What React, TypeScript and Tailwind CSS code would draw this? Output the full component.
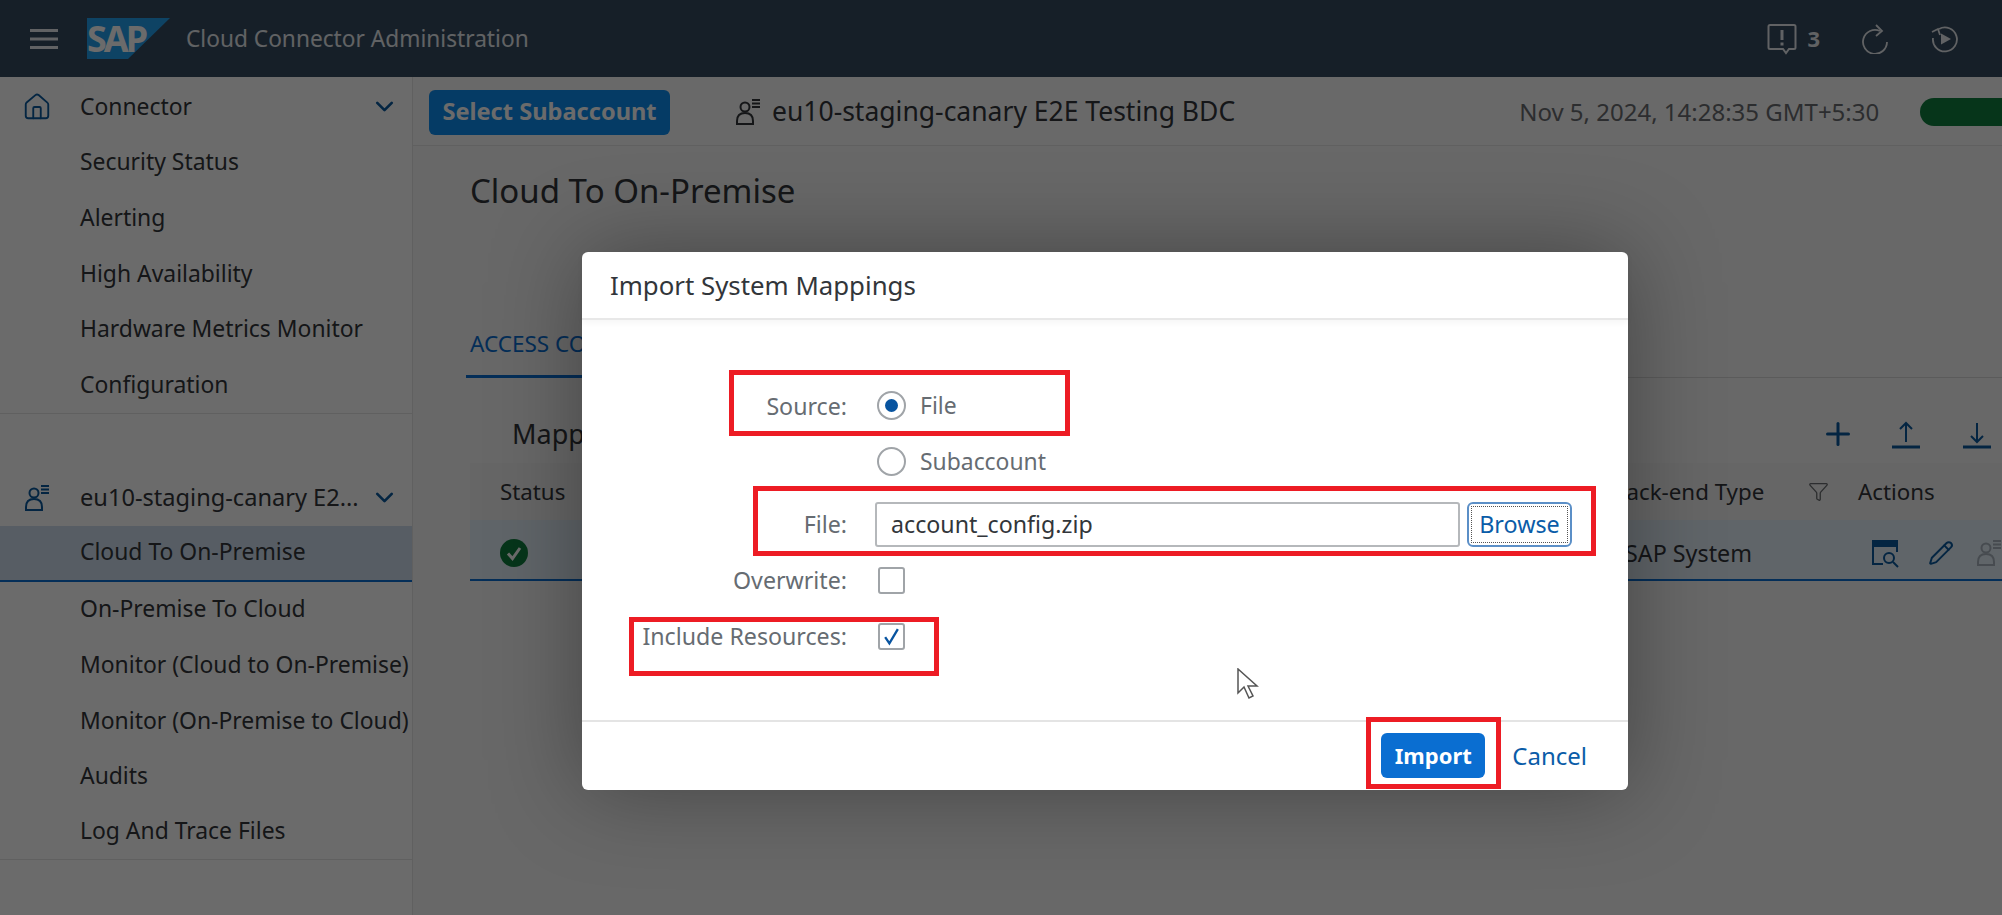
import React from "react";
import { ChevronDown, Home, Plus, Filter, Pencil } from "lucide-react";

const font = { fontFamily: '"Noto Sans", "Open Sans", sans-serif' };

function TenantIcon({ className }: { className: string }) {
  return (
    <svg viewBox="0 0 26 28" fill="none" stroke="currentColor" strokeWidth="2" className={className}>
      <circle cx="10" cy="9" r="4.5" />
      <path d="M2 26v-3c0-5 3-8 8-8s8 3 8 8v3z" />
      <path d="M17 2h8M17 5.5h8M17 9h8" />
    </svg>
  );
}

function NavRow({ label, active, last }: { label: string; active?: boolean; last?: boolean }) {
  return (
    <div
      className={`flex h-[55.7px] items-center pl-[80px] whitespace-nowrap text-[22.9px] text-[#32363a] ${
        active ? "bg-[#cfdeee] border-b-2 border-[#0a6ed1]" : ""
      } ${last ? "border-b border-[#e5e5e5]" : ""}`}
    >
      {label}
    </div>
  );
}

function NavHead({ label, icon, size }: { label: string; icon: React.ReactNode; size: string }) {
  return (
    <div className={`flex h-[55.7px] items-center whitespace-nowrap text-[#32363a] ${size}`}>
      <div className="flex w-[80px] justify-center pr-[6px]">{icon}</div>
      <span className="flex-1">{label}</span>
      <ChevronDown className="mr-[13px] h-[29px] w-[29px] text-[#0a5a9e]" strokeWidth={2.2} />
    </div>
  );
}

function FormRow({ label, className, children }: { label: string; className: string; children: React.ReactNode }) {
  return (
    <div className={`flex items-center ${className}`}>
      <span className="w-[265px] whitespace-nowrap text-right text-[23.2px] text-[#666c72]">{label}</span>
      <div className="ml-[28px] flex flex-1 items-center">{children}</div>
    </div>
  );
}

function Radio({ checked }: { checked?: boolean }) {
  return (
    <span className="flex h-[29px] w-[29px] items-center justify-center rounded-full border-2 border-[#a0a4a8] bg-white">
      {checked && <span className="h-[13px] w-[13px] rounded-full bg-[#0854a0]" />}
    </span>
  );
}

function RedBox({ className }: { className: string }) {
  return <div className={`absolute border-[5px] border-[#ed1c24] ${className}`} />;
}

export default function App() {
  return (
    <div className="relative h-[915px] w-[2002px] overflow-hidden bg-[#f7f7f7]" style={font}>
      {/* Shell bar */}
      <header className="flex h-[77px] items-center bg-[#354a5f] pl-[30px] pr-[43px] text-[#e6eaee]">
        <svg viewBox="0 0 28 20" className="h-[20px] w-[28px]" fill="currentColor">
          <rect y="0" width="28" height="3" />
          <rect y="8.5" width="28" height="3" />
          <rect y="17" width="28" height="3" />
        </svg>
        <div className="relative ml-[29px] flex h-[41px] w-[83px] items-center">
          <svg viewBox="0 0 83 41" className="absolute inset-0 h-[41px] w-[83px]">
            <polygon points="0,0 83,0 41,41 0,41" fill="#22a0ee" />
          </svg>
          <span className="relative text-[36px] font-bold leading-none tracking-[-3px] text-white">SAP</span>
        </div>
        <span className="ml-[16px] pt-[1px] text-[22.7px]">Cloud Connector Administration</span>
        <div className="flex-1" />
        <svg viewBox="0 0 30 32" fill="none" stroke="currentColor" strokeWidth="2" className="h-[32px] w-[30px]">
          <path d="M3 2h24a1.5 1.5 0 0 1 1.5 1.5v21a1.5 1.5 0 0 1-1.5 1.500h-5l-3 4-3-4H3a1.500 1.500 0 0 1-1.500-1.500v-21A1.500 1.500 0 0 1 3 2z" />
          <path d="M15 7v10M15 19.500v3" strokeWidth="3" />
        </svg>
        <span className="ml-[10px] text-[22px] font-bold">3</span>
        <svg viewBox="0 0 28 30" fill="none" stroke="currentColor" strokeWidth="1.800" className="ml-[41px] h-[30px] w-[28px]">
          <path d="M19 7a12 12 0 1 0 7 11" />
          <path d="M15 1l6 6-6 5" />
        </svg>
        <svg viewBox="0 0 28 28" fill="none" stroke="currentColor" strokeWidth="1.800" className="ml-[42px] h-[28px] w-[28px]">
          <path d="M8 4a12 12 0 1 1-6 9" />
          <path d="M1 7l6-3 2 6" />
          <path d="M10 8.500l10 5.500-10 5.500z" fill="currentColor" stroke="none" />
        </svg>
      </header>

      <div className="flex h-[838px]">
        {/* Side navigation */}
        <aside className="w-[413px] shrink-0 border-r border-[#e5e5e5] bg-white">
          <div className="h-[2px]" />
          <NavHead size="text-[22.9px]" label="Connector" icon={<Home className="h-[30px] w-[30px] text-[#0a5a9e]" strokeWidth={1.5} />} />
          <NavRow label="Security Status" />
          <NavRow label="Alerting" />
          <NavRow label="High Availability" />
          <NavRow label="Hardware Metrics Monitor" />
          <NavRow label="Configuration" />
          <div className="border-t border-[#e5e5e5]" />
          <div className="h-[56px]" />
          <NavHead size="text-[23.6px]" label="eu10-staging-canary E2..." icon={<TenantIcon className="h-[28px] w-[26px] text-[#0a5a9e]" />} />
          <NavRow label="Cloud To On-Premise" active />
          <NavRow label="On-Premise To Cloud" />
          <NavRow label="Monitor (Cloud to On-Premise)" />
          <NavRow label="Monitor (On-Premise to Cloud)" />
          <NavRow label="Audits" />
          <NavRow label="Log And Trace Files" last />
        </aside>

        {/* Main */}
        <main className="min-w-0 flex-1">
          <div className="flex h-[69px] items-center border-b border-[#e5e5e5] bg-[#fafafa] pl-[16px] pt-[2px]">
            <button className="h-[45px] w-[241px] shrink-0 rounded-[6px] bg-[#0c8cf0] text-[23.6px] font-bold text-white">Select Subaccount</button>
            <TenantIcon className="ml-[65px] h-[28px] w-[26px] shrink-0 text-[#32363a]" />
            <span className="ml-[11px] whitespace-nowrap text-[26.5px] text-[#32363a]">eu10-staging-canary E2E Testing BDC</span>
            <span className="ml-[284px] whitespace-nowrap text-[24px] text-[#6a6d70]">Nov 5, 2024, 14:28:35 GMT+5:30</span>
            <span className="ml-[41px] h-[28px] w-[120px] shrink-0 rounded-full bg-[#107e3e]" />
          </div>

          <div className="pl-[57px]">
            <h1 className="pt-[23px] text-[33px] font-normal leading-[44px] text-[#32363a]">Cloud To On-Premise</h1>
            <div className="mt-[99px] h-[66px] border-b border-[#d9d9d9]">
              <span className="-ml-[4px] inline-flex h-[66px] items-center border-b-[3px] border-[#0a6ed1] px-[4px] text-[22.5px] text-[#0a6ed1]">ACCESS CONTROL</span>
            </div>
          </div>

          <div className="pl-[57px] pt-[39px]">
            <div className="flex h-[46px] items-center justify-between pb-[12px] pl-[42px] pr-[11px]">
              <span className="text-[27px] text-[#32363a]">Mappings</span>
              <div className="flex items-center">
                <Plus className="h-[36px] w-[36px] text-[#0a5a9e]" strokeWidth={2} />
                <svg viewBox="0 0 28 28" fill="none" stroke="#0a5a9e" strokeWidth="2" className="ml-[36px] h-[30px] w-[28px]">
                  <path d="M14 22V3M8 9l6-6 6 6" />
                  <path d="M0 27h28" strokeWidth="3" />
                </svg>
                <svg viewBox="0 0 28 28" fill="none" stroke="#0a5a9e" strokeWidth="2" className="ml-[43px] h-[30px] w-[28px]">
                  <path d="M14 3v19M8 16l6 6 6-6" />
                  <path d="M0 27h28" strokeWidth="3" />
                </svg>
              </div>
            </div>
            <div className="grid h-[57px] grid-cols-[1130px_258px_auto] items-center bg-[#f2f2f2] text-[22.3px] text-[#32363a]">
              <span className="pl-[30px]">Status</span>
              <span className="flex items-center pl-[12px] whitespace-nowrap">
                Back-end Type
                <Filter className="ml-[44px] h-[21px] w-[21px] text-[#6a6d70]" strokeWidth={1.5} />
              </span>
              <span>Actions</span>
            </div>
            <div className="grid h-[61px] grid-cols-[1130px_258px_auto] items-center border-b-2 border-[#0a6ed1] bg-[#e5f0fa] pt-[7px] text-[23.3px] text-[#32363a]">
              <span className="flex items-center pl-[30px]">
                <svg viewBox="0 0 28 28" className="h-[28px] w-[28px]">
                  <circle cx="14" cy="14" r="14" fill="#107e3e" />
                  <path d="M8 14.500l4.500 5L20 9" fill="none" stroke="#fff" strokeWidth="3" />
                </svg>
              </span>
              <span className="pl-[25px] whitespace-nowrap">SAP System</span>
              <span className="flex items-center pl-[14px]">
                <svg viewBox="0 0 28 32" fill="none" stroke="#0a5a9e" strokeWidth="2" className="h-[32px] w-[28px]">
                  <path d="M11 27H1V4h24v11" />
                  <path d="M1 4h24v5H1z" fill="#0a5a9e" />
                  <circle cx="17" cy="21" r="5" />
                  <path d="M21 25l5 5" />
                </svg>
                <Pencil className="ml-[28px] h-[26px] w-[26px] text-[#0a5a9e]" strokeWidth={1.8} />
                <TenantIcon className="ml-[22px] h-[28px] w-[26px] text-[#a9b4be]" />
              </span>
            </div>
          </div>
        </main>
      </div>

      {/* Blocking layer */}
      <div className="absolute inset-0 bg-black/[0.58]" />

      {/* Dialog */}
      <section className="absolute left-[582px] top-[252px] flex h-[538px] w-[1046px] flex-col rounded-[6px] bg-white shadow-[0_0_90px_rgba(0,0,0,0.35)]">
        <div className="flex h-[68px] items-center border-b-2 border-[#e8e8e8] pl-[28px] pt-[1px] text-[25.8px] text-[#32363a] shadow-[0_3px_6px_rgba(0,0,0,0.04)]">
          Import System Mappings
        </div>
        <div className="flex-1 pt-[58px]">
          <FormRow label="Source:" className="h-[56px]">
            <span className="ml-[2px]"><Radio checked /></span>
            <span className="ml-[14px] text-[22.9px] text-[#666c72]">File</span>
          </FormRow>
          <FormRow label="" className="h-[56px]">
            <span className="ml-[2px]"><Radio /></span>
            <span className="ml-[14px] text-[22.9px] text-[#666c72]">Subaccount</span>
          </FormRow>
          <FormRow label="File:" className="mt-[6px] h-[56px]">
            <div className="flex h-[45px] w-[585px] items-center rounded-[3px] border-2 border-[#b5b8bb] pl-[14px] text-[23.2px] text-[#32363a]">account_config.zip</div>
            <button className="ml-[7px] flex h-[45px] w-[105px] items-center justify-center rounded-[6px] border-2 border-[#5b8fc7] text-[23.3px] text-[#0a5ca8]">
              <span className="flex h-[37px] w-[97px] items-center justify-center border border-dotted border-[#555]">Browse</span>
            </button>
          </FormRow>
          <FormRow label="Overwrite:" className="h-[56px]">
            <span className="ml-[3px] h-[27px] w-[27px] rounded-[3px] border-2 border-[#a0a4a8]" />
          </FormRow>
          <FormRow label="Include Resources:" className="h-[56px]">
            <span className="ml-[3px] flex h-[27px] w-[27px] items-center justify-center rounded-[3px] border-2 border-[#a0a4a8]">
              <svg viewBox="0 0 18 18" className="h-[19px] w-[19px]" fill="none" stroke="#0854a0" strokeWidth="2.200">
                <path d="M3 9.500l4 6L15 2" />
              </svg>
            </span>
          </FormRow>
        </div>
        <div className="flex h-[70px] items-center justify-end border-t-2 border-[#e4e4e4] pb-[1px] pr-[41px]">
          <button className="h-[45px] w-[104px] rounded-[6px] bg-[#0a6ed1] text-[22px] font-bold text-white">Import</button>
          <span className="ml-[27px] text-[24px] text-[#0a5ca8]">Cancel</span>
        </div>
      </section>

      {/* Callouts drawn over the screenshot */}
      <RedBox className="left-[729px] top-[370px] h-[66px] w-[341px]" />
      <RedBox className="left-[753px] top-[486px] h-[70px] w-[843px]" />
      <RedBox className="left-[629px] top-[617px] h-[59px] w-[310px]" />
      <RedBox className="left-[1366px] top-[717px] h-[72px] w-[135px]" />

      {/* Mouse pointer */}
      <svg viewBox="0 0 22 32" className="absolute left-[1237px] top-[668px] h-[32px] w-[22px]" fill="#fff" stroke="#555" strokeWidth="1.500">
        <path d="M1 1v24l6-6 5 11 4-2-5-10h9z" />
      </svg>
    </div>
  );
}
